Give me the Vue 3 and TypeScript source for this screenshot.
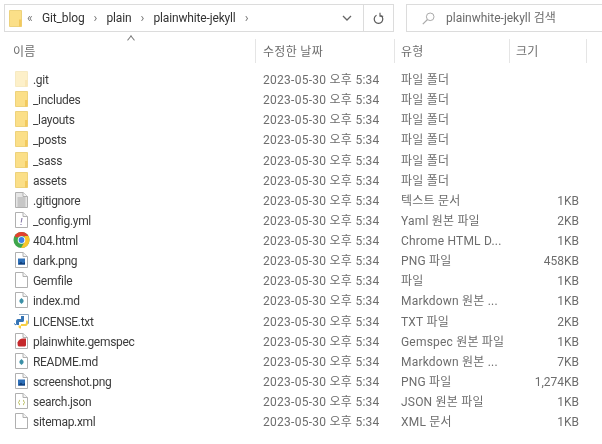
<script setup lang="ts">
type Row = { name: string; icon: string; date: string; kind: string; size: string }
const date = '2023-05-30 오후 5:34'
const rows: Row[] = [
  { name: '.git', icon: 'ghost', date, kind: '파일 폴더', size: '' },
  { name: '_includes', icon: 'folder', date, kind: '파일 폴더', size: '' },
  { name: '_layouts', icon: 'folder', date, kind: '파일 폴더', size: '' },
  { name: '_posts', icon: 'folder', date, kind: '파일 폴더', size: '' },
  { name: '_sass', icon: 'folder', date, kind: '파일 폴더', size: '' },
  { name: 'assets', icon: 'folder', date, kind: '파일 폴더', size: '' },
  { name: '.gitignore', icon: 'text', date, kind: '텍스트 문서', size: '1KB' },
  { name: '_config.yml', icon: 'yml', date, kind: 'Yaml 원본 파일', size: '2KB' },
  { name: '404.html', icon: 'chrome', date, kind: 'Chrome HTML D...', size: '1KB' },
  { name: 'dark.png', icon: 'png', date, kind: 'PNG 파일', size: '458KB' },
  { name: 'Gemfile', icon: 'blank', date, kind: '파일', size: '1KB' },
  { name: 'index.md', icon: 'md', date, kind: 'Markdown 원본 ...', size: '1KB' },
  { name: 'LICENSE.txt', icon: 'python', date, kind: 'TXT 파일', size: '2KB' },
  { name: 'plainwhite.gemspec', icon: 'gem', date, kind: 'Gemspec 원본 파일', size: '1KB' },
  { name: 'README.md', icon: 'md', date, kind: 'Markdown 원본 ...', size: '7KB' },
  { name: 'screenshot.png', icon: 'png', date, kind: 'PNG 파일', size: '1,274KB' },
  { name: 'search.json', icon: 'json', date, kind: 'JSON 원본 파일', size: '1KB' },
  { name: 'sitemap.xml', icon: 'blank', date, kind: 'XML 문서', size: '1KB' },
]
const page = 'M2.500 1.500H10L14.500 5.500V16.500H2.500Z'
</script>

<template>
  <div class="window">
    <div class="toolbar">
      <div class="address">
        <svg class="addr-folder" width="13" height="17" viewBox="0 0 13 17">
          <path d="M.5 .5H12.500V16.500H.5Z" fill="#fbdf88" stroke="#edd27c" />
          <path d="M10 9.500H12.500V16.500H10Z" fill="#f2c95e" />
        </svg>
        <span class="chev">«</span>
        <span class="crumb">Git_blog</span>
        <span class="sep">›</span>
        <span class="crumb">plain</span>
        <span class="sep">›</span>
        <span class="crumb">plainwhite-jekyll</span>
        <span class="sep">›</span>
        <svg class="drop" width="10" height="6" viewBox="0 0 10 6"><path d="M1 1L5 5L9 1" fill="none" stroke="#666" stroke-width="1.300" /></svg>
        <span class="refresh">
          <svg width="11" height="13" viewBox="0 0 11 13">
            <path d="M3.500 3.300A4.300 4.300 0 1 0 7.500 3.300" fill="none" stroke="#555" stroke-width="1.200" />
            <path d="M7 .8V4.300H10.200" fill="none" stroke="#555" stroke-width="1.100" />
          </svg>
        </span>
      </div>
      <div class="search">
        <svg width="13" height="13" viewBox="0 0 13 13">
          <circle cx="8.200" cy="4.800" r="3.800" fill="none" stroke="#aaa" />
          <path d="M5.500 7.500L.8 12.200" stroke="#aaa" stroke-width="1.200" />
        </svg>
        <span>plainwhite-jekyll 검색</span>
      </div>
    </div>

    <div class="head">
      <span class="col-name">이름<i class="caret"></i></span>
      <span class="col-date">수정한 날짜</span>
      <span class="col-kind">유형</span>
      <span class="col-size">크기</span>
      <span class="col-end"></span>
    </div>

    <div class="list">
      <div v-for="r in rows" :key="r.name" class="row">
        <span class="file">
          <svg class="ico" width="18" height="18" viewBox="0 0 18 18">
            <template v-if="r.icon === 'folder' || r.icon === 'ghost'">
              <g :opacity="r.icon === 'ghost' ? 0.45 : 1">
                <path d="M2.500 1.500H14.500V16.500H2.500Z" fill="#fbdf88" stroke="#edd27c" />
                <path d="M12 10H14.500V16.500H12Z" fill="#f2c95e" />
              </g>
            </template>
            <template v-else-if="r.icon === 'chrome'">
              <circle cx="8.500" cy="9" r="8" fill="#3fa64b" />
              <path d="M8.500 1A8 8 0 0 1 15.400 5H8.500L3.300 6.500L1.600 5A8 8 0 0 1 8.500 1Z" fill="#e2412f" />
              <path d="M15.400 5A8 8 0 0 1 8 17L11.500 11V5Z" fill="#f9c62b" />
              <circle cx="8.500" cy="9" r="3.800" fill="#fff" />
              <circle cx="8.500" cy="9" r="2.900" fill="#3d7fe6" />
            </template>
            <template v-else-if="r.icon === 'python'">
              <path d="M6 2.500H15.500V11.500H13" fill="#fff" stroke="#8ba6c2" />
              <path d="M3 9.500C3 7.500 4 7 6 7H8V4H11V8.500C11 9.500 10 10 9 10H6V13H3.500C3 12 3 11 3 9.500Z" fill="#3574b5" />
              <path d="M8 12H11.500C12.500 12 13 11.500 13 10.500V8.500H14.500C15.500 10 15 14 13 14H8V16.500C6.500 16.500 5.500 16 5.500 14.500V13.500H8Z" fill="#f6cf45" />
              <path d="M1 11.500L3 13" stroke="#3574b5" />
            </template>
            <template v-else>
              <path :d="page" :fill="r.icon === 'text' ? '#e6e6e6' : '#fff'" stroke="#b0b0b0" />
              <path d="M10 1.500V5.500H14.500" fill="#f4f4f4" stroke="#b0b0b0" />
              <path v-if="r.icon === 'text'" d="M4.500 7H12.500M4.500 9H12.500M4.500 11H12.500M4.500 13H12.500M4.500 15H12.500" stroke="#a8a8a8" />
              <path v-if="r.icon === 'png'" d="M5 7.500H12V13.500H5Z" fill="#2d6fb8" />
              <path v-if="r.icon === 'png'" d="M5 13.500L8 10.500L10 12.500L12 11V13.500Z" fill="#123f7a" />
              <path v-if="r.icon === 'md'" d="M6.500 9L8.500 7L10.500 9V11L8.500 13L6.500 11Z" fill="#3b8fa6" />
              <path v-if="r.icon === 'yml'" d="M9 7L8.200 11.500M8 13V14" stroke="#8678a8" stroke-width="1.100" />
              <path v-if="r.icon === 'gem'" d="M4.500 10.500C5.500 8 7.500 6.500 10 6.500H13V13C13 14 12 14.500 11 14.500H6C5 14.500 4.500 13.500 4.500 10.500Z" fill="#c4282b" />
              <path v-if="r.icon === 'json'" d="M7 8C6 8 6.500 10 5.500 10.500C6.500 11 6 13 7 13M10 8C11 8 10.500 10 11.500 10.500C10.500 11 11 13 10 13" fill="none" stroke="#b5ba55" />
            </template>
          </svg>
          <span class="name">{{ r.name }}</span>
        </span>
        <span class="col-date">{{ r.date }}</span>
        <span class="col-kind">{{ r.kind }}</span>
        <span class="col-size size">{{ r.size }}</span>
      </div>
    </div>
  </div>
</template>

<style scoped>
.window {
  width: 602px;
  height: 444px;
  overflow: hidden;
  background: #fff;
  font-family: Roboto, "Noto Sans CJK KR", sans-serif;
  font-size: 12px;
  line-height: 16px;
  color: #6d6d6d;
  filter: blur(0.3px);
}
.toolbar {
  display: flex;
  gap: 12px;
  padding: 4px 0 0 4px;
}
.address {
  display: flex;
  align-items: center;
  width: 390px;
  height: 28px;
  box-sizing: border-box;
  border: 1px solid #dcdcdc;
  padding-left: 4px;
  color: #333;
}
.addr-folder { flex: none; margin-right: 5px; }
.chev { color: #777; width: 15px; font-size: 12px; }
.crumb { letter-spacing: -0.15px; }
.sep { color: #777; width: 22px; text-align: center; font-size: 13px; }
.drop { margin-left: auto; margin-right: 11px; }
.refresh {
  display: flex;
  align-items: center;
  justify-content: center;
  width: 29px;
  height: 100%;
  border-left: 1px solid #dcdcdc;
}
.search {
  display: flex;
  align-items: center;
  flex: 1;
  height: 28px;
  box-sizing: border-box;
  border: 1px solid #dcdcdc;
  border-right: 0;
  padding-left: 15px;
  gap: 11px;
  color: #6b6b6b;
}
.head {
  display: grid;
  grid-template-columns: 256px 139px 115px 77px 1fr;
  height: 31px;
  margin-top: 7px;
}
.head > span {
  position: relative;
  display: flex;
  align-items: center;
  border-right: 1px solid #e5e5e5;
  padding: 2px 0 0 7px;
  height: 24px;
  box-sizing: border-box;
  letter-spacing: 0.3px;
}
.head .col-name { padding-left: 13px; }
.head .col-kind { padding-left: 6px; }
.head .col-size { padding-left: 6px; }
.head .col-end { border-right: 0; }
.caret {
  position: absolute;
  left: 128px;
  top: -2px;
  width: 5px;
  height: 5px;
  border-left: 1px solid #777;
  border-top: 1px solid #777;
  transform: rotate(45deg) skew(6deg, 6deg);
}
.list { margin-top: -1px; }
.row {
  display: grid;
  grid-template-columns: 256px 139px 115px 77px 1fr;
  align-items: center;
  height: 20.13px;
}
.file {
  display: flex;
  align-items: center;
  padding-left: 13px;
  gap: 2px;
  color: #3c3c3c;
}
.ico { flex: none; }
.name { white-space: nowrap; letter-spacing: -0.3px; padding-top: 2px; }
.row .col-date { padding: 2px 0 0 7px; white-space: nowrap; letter-spacing: 0.27px; }
.row .col-kind { padding: 2px 0 0 6px; white-space: nowrap; letter-spacing: 0.2px; }
.size { text-align: right; padding: 2px 8px 0 0; }
</style>
